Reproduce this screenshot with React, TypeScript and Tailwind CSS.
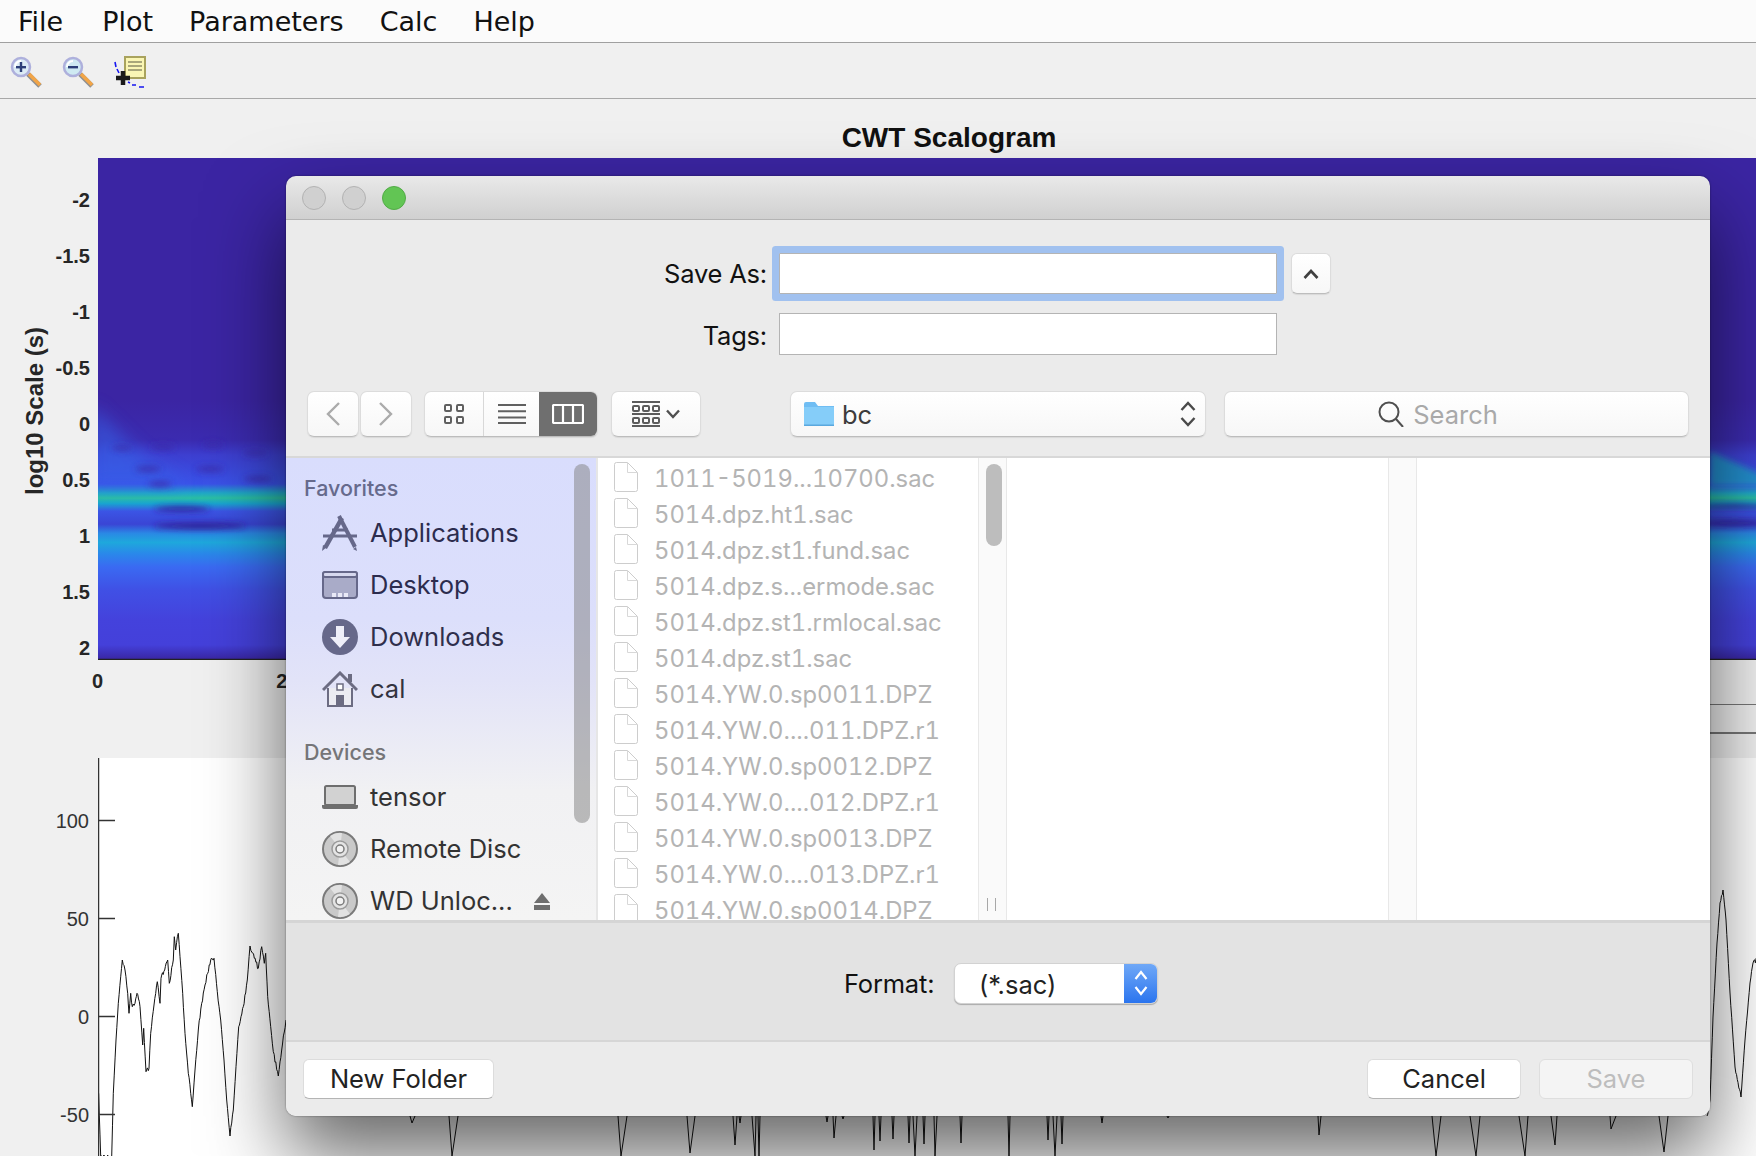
import React from 'react'

const files = [
  '1011-5019...10700.sac',
  '5014.dpz.ht1.sac',
  '5014.dpz.st1.fund.sac',
  '5014.dpz.s...ermode.sac',
  '5014.dpz.st1.rmlocal.sac',
  '5014.dpz.st1.sac',
  '5014.YW.0.sp0011.DPZ',
  '5014.YW.0....011.DPZ.r1',
  '5014.YW.0.sp0012.DPZ',
  '5014.YW.0....012.DPZ.r1',
  '5014.YW.0.sp0013.DPZ',
  '5014.YW.0....013.DPZ.r1',
  '5014.YW.0.sp0014.DPZ',
]

// control points read off the trace, in zoomed crop coordinates
const leftTrace = [
  [296, 1060], [302, 1250], [335, 1250], [340, 1060], [348, 900], [355, 790], [367, 660], [375, 690], [383, 760], [387, 820],
  [392, 760], [397, 800], [405, 790], [411, 760], [420, 800], [428, 915], [431, 865], [438, 995], [447, 985], [452, 880],
  [462, 795], [472, 725], [480, 790], [483, 715], [494, 690], [503, 660], [508, 730], [520, 660], [523, 590], [527, 630],
  [535, 580], [540, 650], [548, 760], [555, 880], [565, 1000], [577, 1100], [585, 990], [595, 870], [605, 790], [615, 735],
  [623, 700], [632, 660], [642, 655], [652, 755], [662, 840], [672, 960], [680, 1080], [690, 1188], [700, 1110], [708, 980],
  [716, 860], [730, 800], [742, 720], [750, 618], [758, 640], [775, 685], [785, 620], [793, 670], [797, 640], [803, 770],
  [812, 860], [820, 935], [835, 1008], [845, 930], [858, 840],
].map(([x, y]) => [x / 3, y / 3 + 740])

const rightTrace = [
  [1707, 1116], [1710, 1100], [1713, 1017], [1717, 943], [1720, 903], [1723, 890], [1726, 920], [1730, 993], [1735, 1067],
  [1741, 1097], [1745, 1040], [1750, 983], [1753, 963], [1757, 960],
]

// the bits of trace that hang below the dialog: x in, x at the tip, x out, tip y
const spikes = [
  [410, 412, 415, 1123], [449, 452, 458, 1156], [618, 621, 627, 1156], [687, 690, 695, 1153], [733, 735, 737, 1145],
  [739, 740, 741, 1123], [752, 755, 756, 1156], [758, 759, 760, 1156], [826, 827, 828, 1122], [833, 834, 836, 1138],
  [842, 843, 844, 1119], [873, 874, 875, 1150], [879, 880, 881, 1141], [892, 893, 894, 1139], [908, 909, 910, 1143],
  [913, 915, 917, 1156], [923, 924, 925, 1144], [934, 935, 937, 1156], [960, 961, 962, 1143], [1008, 1009, 1010, 1156],
  [1047, 1048, 1049, 1140], [1053, 1055, 1057, 1156], [1061, 1062, 1063, 1144], [1101, 1102, 1103, 1123],
  [1167, 1168, 1169, 1118], [1318, 1319, 1321, 1135], [1432, 1436, 1441, 1156], [1470, 1476, 1480, 1156],
  [1519, 1525, 1528, 1156], [1551, 1555, 1557, 1145], [1610, 1611, 1616, 1129], [1659, 1664, 1668, 1152],
]

const noisy = (pts: number[][]) => {
  let d = `M${pts[0][0]} ${pts[0][1]}`
  let n = 0
  for (let i = 1; i < pts.length; i++) {
    const [x0, y0] = pts[i - 1]
    const [x1, y1] = pts[i]
    const steps = Math.max(1, Math.round((x1 - x0) / 0.8))
    // flat stretches look scratchier than the long flanks
    const amp = Math.abs(y1 - y0) / Math.max(x1 - x0, 0.1) > 9 ? 1.5 : 5
    for (let s = 1; s <= steps; s++) {
      n++
      const t = s / steps
      const j = Math.sin(n * 12.9898) * 43758.5453
      const r = (j - Math.floor(j) - 0.5) * amp
      d += ` L${(x0 + (x1 - x0) * t).toFixed(1)} ${(y0 + (y1 - y0) * t + (s === steps ? 0 : r)).toFixed(1)}`
    }
  }
  return d
}

const Heatmap = () => (
  <svg viewBox="98 158 1658 502" preserveAspectRatio="none" className="block w-full h-full">
    <defs>
      <linearGradient id="hm" x1="0" y1="157" x2="0" y2="660" gradientUnits="userSpaceOnUse">
        <stop offset="0" stopColor="#3b25a3" />
        <stop offset="0.483" stopColor="#3b25a3" />
        <stop offset="0.563" stopColor="#3b2bb0" />
        <stop offset="0.592" stopColor="#3d3fd0" />
        <stop offset="0.650" stopColor="#3a52e8" />
        <stop offset="0.668" stopColor="#20a8c8" />
        <stop offset="0.678" stopColor="#2bbfa4" />
        <stop offset="0.689" stopColor="#1aa5d0" />
        <stop offset="0.704" stopColor="#3b55e5" />
        <stop offset="0.730" stopColor="#3a45d5" />
        <stop offset="0.748" stopColor="#2a88e5" />
        <stop offset="0.766" stopColor="#1ea8dc" />
        <stop offset="0.789" stopColor="#2a88ea" />
        <stop offset="0.815" stopColor="#3a6af2" />
        <stop offset="0.861" stopColor="#4050e5" />
        <stop offset="0.920" stopColor="#4442dc" />
        <stop offset="0.970" stopColor="#4440da" />
        <stop offset="0.990" stopColor="#3c2eb4" />
        <stop offset="1" stopColor="#3a25a0" />
      </linearGradient>
      <filter id="b4" x="-50%" y="-50%" width="200%" height="200%"><feGaussianBlur stdDeviation="3" /></filter>
      <filter id="b10" x="-50%" y="-50%" width="200%" height="200%"><feGaussianBlur stdDeviation="9" /></filter>
    </defs>
    <rect x="98" y="157" width="1658" height="503" fill="url(#hm)" />
    <polygon points="90,405 90,486 190,486 145,458" fill="#3566ea" opacity="0.55" filter="url(#b10)" />
    <polygon points="1710,452 1710,486 1770,486 1770,478" fill="#1f9fc8" opacity="0.8" filter="url(#b4)" />
    <g fill="#3a2ba8" opacity="0.8" filter="url(#b4)">
      <ellipse cx="122" cy="448" rx="10" ry="2.5" />
      <ellipse cx="163" cy="447" rx="12" ry="2.5" />
      <ellipse cx="213" cy="445" rx="10" ry="2.5" />
      <ellipse cx="255" cy="453" rx="12" ry="2.5" />
      <ellipse cx="148" cy="469" rx="13" ry="3" />
      <ellipse cx="210" cy="469" rx="14" ry="3" />
      <ellipse cx="258" cy="479" rx="14" ry="3" />
      <ellipse cx="160" cy="484" rx="12" ry="3" />
    </g>
    <g fill="#2e1f90" filter="url(#b4)">
      <ellipse cx="182" cy="509" rx="28" ry="2.5" />
      <ellipse cx="200" cy="526" rx="46" ry="3" />
      <ellipse cx="1735" cy="506" rx="34" ry="2" />
      <ellipse cx="1735" cy="523" rx="34" ry="2.5" />
    </g>
    <line x1="98" y1="659.5" x2="1756" y2="659.5" stroke="#222" strokeWidth="1.5" />
  </svg>
)

const Trace = () => (
  <svg viewBox="98 758 1658 398" className="block w-full h-full">
    <g fill="none" stroke="#111" strokeWidth="1">
      <path d={noisy(leftTrace)} />
      <path d={noisy(rightTrace)} />
      {spikes.map(([a, m, b, y], i) => (
        <path key={i} d={`M${a} 1116 L${m} ${y} L${b} 1116`} />
      ))}
    </g>
    <g stroke="#333" strokeWidth="1.5">
      <line x1="98.5" y1="758" x2="98.5" y2="1156" />
      <line x1="98" y1="820.5" x2="115" y2="820.5" />
      <line x1="98" y1="918.5" x2="115" y2="918.5" />
      <line x1="98" y1="1016.5" x2="115" y2="1016.5" />
      <line x1="98" y1="1114.5" x2="115" y2="1114.5" />
    </g>
  </svg>
)

const Magnifier = ({ minus }: { minus?: boolean }) => (
  <svg width="32" height="32" viewBox="0 0 32 32">
    <line x1="18" y1="18" x2="30" y2="30" stroke="#8f8f8f" strokeWidth="5" />
    <line x1="19" y1="18" x2="30" y2="29" stroke="#f2a548" strokeWidth="3.5" />
    <circle cx="11" cy="11" r="9" fill={minus ? '#cfeaf2' : '#dcecf6'} stroke="#aeb0dc" strokeWidth="2.5" />
    <path d="M5 11a6 6 0 0 1 6-6" stroke="#fff" strokeWidth="2" fill="none" />
    <rect x="6" y="10" width="10" height="2.4" fill="#2c3f78" />
    {!minus && <rect x="9.8" y="6" width="2.4" height="10" fill="#2c3f78" />}
  </svg>
)

const DataCursor = () => (
  <svg width="32" height="32" viewBox="0 0 32 32">
    <rect x="11" y="1" width="20" height="21" fill="#faf6b4" stroke="#a9a35e" strokeWidth="2" />
    <path d="M14 6h14M14 10h14M14 14h14" stroke="#a9a77a" strokeWidth="2" />
    <path d="M1 6l1 5M3 13l2 4M14 26l2 1M18 29h4M25 31h5" stroke="#1616f0" strokeWidth="1.6" fill="none" />
    <path d="M2 22h14M9 15v14" stroke="#1a1a1a" strokeWidth="4.5" />
  </svg>
)

const FileIcon = () => (
  <svg width="24" height="30" viewBox="0 0 24 30" className="shrink-0">
    <path d="M.5 2.5a2 2 0 0 1 2-2h11l10 10v17a2 2 0 0 1-2 2h-19a2 2 0 0 1-2-2z" fill="#fff" stroke="#cdcdcd" />
    <path d="M13.500.5v10h10" fill="none" stroke="#d8d8d8" />
  </svg>
)

const AppsIcon = () => (
  <svg width="36" height="36" viewBox="0 0 36 36" fill="none" stroke="#66688a">
    <path d="M20 3L3 33" strokeWidth="4.5" />
    <path d="M17 1l16 31" strokeWidth="4" />
    <path d="M10 15h16" strokeWidth="3" />
    <path d="M1 21h34" strokeWidth="3" />
    <path d="M0 36l1-6 4 2z" fill="#66688a" strokeWidth="0" />
    <path d="M35 36l-4-2 3-2z" fill="#66688a" strokeWidth="0" />
  </svg>
)

const DesktopIcon = () => (
  <svg width="36" height="28" viewBox="0 0 36 28">
    <rect x="1" y="1" width="34" height="26" rx="3" fill="#a9abc8" stroke="#66688a" strokeWidth="2" />
    <rect x="1" y="1" width="34" height="5" rx="2" fill="#d6d8ee" stroke="#66688a" strokeWidth="2" />
    <path d="M10 22h4v4h-4zM16 22h4v4h-4zM22 22h4v4h-4z" fill="#e9e9f6" />
  </svg>
)

const DownloadsIcon = () => (
  <svg width="36" height="36" viewBox="0 0 36 36">
    <circle cx="18" cy="18" r="18" fill="#66688a" />
    <path d="M14 7h8v11h6L18 29 8 18h6z" fill="#eeeef8" />
  </svg>
)

const HomeIcon = () => (
  <svg width="36" height="36" viewBox="0 0 36 36">
    <path d="M6 17v18h24V17" fill="#ececf2" stroke="#6c6c82" strokeWidth="2" />
    <path d="M1 19L18 2l17 17" fill="none" stroke="#6c6c82" strokeWidth="3" />
    <rect x="26" y="3" width="4" height="8" fill="#6c6c82" />
    <rect x="15" y="13" width="6" height="6" fill="#fff" stroke="#6c6c82" strokeWidth="1.5" />
    <rect x="14" y="24" width="8" height="11" fill="#6c6c82" />
  </svg>
)

const LaptopIcon = () => (
  <svg width="36" height="24" viewBox="0 0 36 24">
    <rect x="3" y="1" width="30" height="19" rx="1.5" fill="#d2d2d2" stroke="#6e6e6e" strokeWidth="2" />
    <path d="M0 20h36v2a2 2 0 0 1-2 2H2a2 2 0 0 1-2-2z" fill="#6e6e6e" />
  </svg>
)

const DiscIcon = () => (
  <svg width="36" height="36" viewBox="0 0 36 36">
    <circle cx="18" cy="18" r="17" fill="#c9c9c9" stroke="#7a7a7a" strokeWidth="2" />
    <path d="M18 18L8 5a17 17 0 0 1 12-3zM18 18l10 13a17 17 0 0 1-12 3z" fill="#e2e2e2" />
    <circle cx="18" cy="18" r="8" fill="#e4e4e4" stroke="#9a9a9a" strokeWidth="1.5" />
    <circle cx="18" cy="18" r="4" fill="#f2f2f2" stroke="#7a7a7a" strokeWidth="1.5" />
  </svg>
)

const SideRow = ({ icon, label, color, eject }: { icon: React.ReactNode; label: string; color: string; eject?: boolean }) => (
  <div className="h-[52px] flex items-center">
    <div className="w-[36px] ml-[36px] flex justify-center shrink-0">{icon}</div>
    <span className={`ml-[12px] text-[25.500px] ${color}`}>{label}</span>
    {eject && (
      <svg width="16" height="17" viewBox="0 0 16 17" className="ml-[21px]" fill="#6e6e6e">
        <path d="M8 0l8 10H0z" />
        <rect y="12" width="16" height="5" />
      </svg>
    )}
  </div>
)

const Light = ({ green }: { green?: boolean }) => (
  <div className={green ? 'w-[24px] h-[24px] rounded-full bg-[#62c554] border border-[#52ab47]' : 'w-[24px] h-[24px] rounded-full bg-[#d0d0d0] border border-[#b2b2b2]'} />
)

const btn = 'bg-gradient-to-b from-white to-[#f7f7f7] border border-[#dcdcdc] border-b-[#bdbdbd] shadow-[0_1px_1px_rgba(0,0,0,0.08)]'

const App = () => (
  <div className="relative w-[1756px] h-[1156px] overflow-hidden bg-[#f0f0f0] font-['Liberation_Sans',sans-serif]">
    <div className="h-[43px] bg-[#fbfbfb] border-b border-b-[#a0a0a0] flex items-center pl-[18px] pt-[3px] text-[27px] text-[#111] font-['DejaVu_Sans',sans-serif]">
      <span>File</span>
      <span className="ml-[39px]">Plot</span>
      <span className="ml-[36px]">Parameters</span>
      <span className="ml-[36px]">Calc</span>
      <span className="ml-[36px]">Help</span>
    </div>
    <div className="h-[56px] border-b border-b-[#a8a8a8] flex items-center pl-[10px] pt-[2px] gap-[20px]">
      <Magnifier />
      <Magnifier minus />
      <DataCursor />
    </div>

    <div className="h-[59px] flex items-end justify-center pb-[3px] pl-[142px] text-[28px] leading-[34px] font-bold text-[#111]">CWT Scalogram</div>

    <div className="h-[502px] flex">
      <div className="w-[98px] shrink-0 flex">
        <div className="w-[52px] flex items-center justify-center">
          <span className="-rotate-90 whitespace-nowrap text-[24px] font-bold text-[#262626] translate-x-[9px] translate-y-[2px]">log10 Scale (s)</span>
        </div>
        <div className="w-[38px] flex flex-col items-end pt-[14px] text-[20px] font-bold text-[#262626] leading-[56px]">
          {['-2', '-1.5', '-1', '-0.5', '0', '0.5', '1', '1.5', '2'].map(t => (
            <span key={t} className="h-[56px] shrink-0">{t}</span>
          ))}
        </div>
      </div>
      <div className="flex-1">
        <Heatmap />
      </div>
    </div>

    <div className="h-[98px] flex items-start">
      <div className="flex pl-[92px] pt-[6px] gap-[173px] text-[20px] font-bold text-[#262626]">
        <span>0</span>
        <span>2</span>
      </div>
      <div className="ml-auto w-[400px] pt-[44px]">
        <div className="h-[1px] bg-[#777]" />
        <div className="h-[2px] mt-[27px] bg-[#777]" />
      </div>
    </div>

    <div className="h-[398px] flex">
      <div className="w-[98px] shrink-0 flex flex-col items-end pr-[9px] pt-[50px] text-[20px] text-[#333] leading-[26px]">
        <span className="h-[98px] shrink-0">100</span>
        <span className="h-[98px] shrink-0">50</span>
        <span className="h-[98px] shrink-0">0</span>
        <span className="h-[98px] shrink-0">-50</span>
      </div>
      <div className="flex-1 bg-white">
        <Trace />
      </div>
    </div>

    {/* save sheet floats over the figure */}
    <div className="absolute left-[286px] top-[176px] w-[1424px] h-[940px] rounded-[10px] shadow-[0_40px_80px_rgba(0,0,0,0.6),0_0_2px_rgba(0,0,0,0.5)]">
      <div className="w-full h-full rounded-[10px] overflow-hidden flex flex-col font-['Inter',sans-serif] text-[#111]">
        <div className="h-[44px] shrink-0 bg-gradient-to-b from-[#e9e9e9] to-[#d0d0d0] border-b border-b-[#b4b4b4] flex items-center pl-[16px] gap-[16px]">
          <Light />
          <Light />
          <Light green />
        </div>

        <div className="h-[236px] shrink-0 bg-[#ebebeb] flex flex-col pt-[33px]">
          <div className="flex items-center h-[41px]">
            <span className="w-[481px] pt-[1px] text-right text-[25.500px] tracking-[-0.2px]">Save As:</span>
            <div className="ml-[12px] w-[498px] h-[41px] bg-white border border-[#b4b4b4] shadow-[0_0_0_7px_#a1c1ef] rounded-[1px]" />
            <div className={`ml-[14px] w-[40px] h-[41px] rounded-[6px] ${btn} flex items-center justify-center`}>
              <svg width="16" height="10" viewBox="0 0 16 10" fill="none" stroke="#404040" strokeWidth="2.6"><path d="M1.500 9L8 2l6.500 7" /></svg>
            </div>
          </div>
          <div className="flex items-center h-[41px] mt-[19px]">
            <span className="w-[481px] pt-[5px] text-right text-[25.500px] tracking-[-0.2px]">Tags:</span>
            <div className="ml-[12px] w-[498px] h-[42px] bg-white border border-[#b4b4b4]" />
          </div>
          <div className="flex items-stretch h-[46px] mt-[37px] pl-[21px]">
            <div className={`w-[52px] rounded-[7px] ${btn} flex items-center justify-center`}>
              <svg width="16" height="24" viewBox="0 0 16 24" fill="none" stroke="#ababab" strokeWidth="2.4"><path d="M14 1L3 12l11 11" /></svg>
            </div>
            <div className={`w-[52px] ml-[1px] rounded-[7px] ${btn} flex items-center justify-center`}>
              <svg width="16" height="24" viewBox="0 0 16 24" fill="none" stroke="#ababab" strokeWidth="2.4"><path d="M2 1l11 11L2 23" /></svg>
            </div>
            <div className={`w-[174px] ml-[12px] rounded-[7px] overflow-hidden flex ${btn}`}>
              <div className="w-[59px] border-r border-r-[#d8d8d8] flex items-center justify-center">
                <svg width="20" height="20" viewBox="0 0 20 20" fill="none" stroke="#606060" strokeWidth="2"><rect x="1" y="1" width="6" height="6" rx="1" /><rect x="13" y="1" width="6" height="6" rx="1" /><rect x="1" y="13" width="6" height="6" rx="1" /><rect x="13" y="13" width="6" height="6" rx="1" /></svg>
              </div>
              <div className="w-[55px] flex items-center justify-center">
                <svg width="28" height="20" viewBox="0 0 28 20" stroke="#606060" strokeWidth="2"><path d="M0 1h28M0 7.300h28M0 13.600h28M0 19h28" /></svg>
              </div>
              <div className="flex-1 bg-[#6f6f6f] flex items-center justify-center">
                <svg width="32" height="20" viewBox="0 0 32 20" fill="none" stroke="#fff" strokeWidth="2.2"><rect x="1" y="1" width="30" height="18" rx="1" /><path d="M11 1v18M21 1v18" /></svg>
              </div>
            </div>
            <div className={`w-[90px] ml-[13px] rounded-[7px] ${btn} flex items-center justify-center gap-[6px]`}>
              <svg width="28" height="26" viewBox="0 0 28 26" fill="none" stroke="#5c5c5c" strokeWidth="2">
                <path d="M0 1h28M0 13h28M0 25h28" />
                <rect x="1" y="5" width="6" height="5" rx="1" /><rect x="11" y="5" width="6" height="5" rx="1" /><rect x="21" y="5" width="6" height="5" rx="1" />
                <rect x="1" y="17" width="6" height="5" rx="1" /><rect x="11" y="17" width="6" height="5" rx="1" /><rect x="21" y="17" width="6" height="5" rx="1" />
              </svg>
              <svg width="14" height="10" viewBox="0 0 14 10" fill="none" stroke="#505050" strokeWidth="2.4"><path d="M1 1.500l6 6.500 6-6.500" /></svg>
            </div>
            <div className={`w-[416px] ml-[89px] rounded-[7px] ${btn} flex items-center pl-[13px] pr-[9px]`}>
              <svg width="30" height="24" viewBox="0 0 30 24" className="shrink-0">
                <path d="M0 2a2 2 0 0 1 2-2h9l3 4h16v20H0z" fill="#6fbdf3" />
                <rect y="5" width="30" height="19" fill="#85cdf9" />
                <rect y="22.500" width="30" height="1.500" fill="#5aa8de" />
              </svg>
              <span className="ml-[8px] pt-[2px] text-[25.500px] text-[#3c3c3c]">bc</span>
              <svg width="16" height="26" viewBox="0 0 16 26" fill="none" stroke="#4a4a4a" strokeWidth="2.4" className="ml-auto"><path d="M1.500 9L8 2l6.500 7M1.500 17L8 24l6.500-7" /></svg>
            </div>
            <div className={`w-[465px] ml-[18px] rounded-[7px] ${btn} flex items-center justify-center pr-[37px]`}>
              <svg width="26" height="26" viewBox="0 0 26 26" fill="none" stroke="#4f4f4f" strokeWidth="2"><circle cx="11" cy="11" r="9.500" /><path d="M18 18l7 8" /></svg>
              <span className="ml-[9px] pt-[2px] text-[25.500px] text-[#a9a9a9]">Search</span>
            </div>
          </div>
        </div>

        <div className="h-[2px] shrink-0 bg-[#d8d8d8]" />
        <div className="h-[462px] shrink-0 flex bg-white overflow-hidden">
          <div className="w-[310px] shrink-0 relative bg-[linear-gradient(to_bottom,#d9ddfd_0%,#dcdffb_35%,#e2e3f8_48%,#f1f1f3_72%,#f4f4f4_100%)]">
            <div className="absolute right-[6px] top-[6px] w-[16px] h-[359px] rounded-full bg-[#7f7f7f]/50" />
            <div className="h-[18px]" />
            <div className="h-[24px] pl-[18px] text-[21.500px] leading-[24px] font-medium text-[#666a8c]">Favorites</div>
            <div className="pt-[7px]">
              <SideRow icon={<AppsIcon />} label="Applications" color="text-[#2c2c4e]" />
              <SideRow icon={<DesktopIcon />} label="Desktop" color="text-[#2c2c4e]" />
              <SideRow icon={<DownloadsIcon />} label="Downloads" color="text-[#2f2f4c]" />
              <SideRow icon={<HomeIcon />} label="cal" color="text-[#33333f]" />
            </div>
            <div className="h-[24px] mt-[25px] pl-[18px] text-[21.500px] leading-[24px] font-medium text-[#757578]">Devices</div>
            <div className="pt-[7px]">
              <SideRow icon={<LaptopIcon />} label="tensor" color="text-[#333]" />
              <SideRow icon={<DiscIcon />} label="Remote Disc" color="text-[#333]" />
              <SideRow icon={<DiscIcon />} label="WD Unloc..." color="text-[#333]" eject />
            </div>
          </div>
          <div className="w-[2px] shrink-0 bg-[#e6e6e6]" />
          <div className="w-[380px] shrink-0 pt-[1px] overflow-hidden">
            {files.map(f => (
              <div key={f} className="h-[36px] flex items-center pl-[16px]">
                <FileIcon />
                <span className="ml-[16px] pt-[3px] text-[23.800px] tabular-nums text-[#b4b4b4] whitespace-nowrap">{f}</span>
              </div>
            ))}
          </div>
          <div className="relative w-[29px] shrink-0 bg-[#fafafa] border-x border-x-[#e8e8e8]">
            <div className="absolute left-[7px] top-[6px] w-[16px] h-[82px] rounded-full bg-[#bdbdbd]" />
            <div className="absolute left-[8px] bottom-[9px] w-[9px] h-[13px] border-x border-x-[#a8a8a8]" />
          </div>
          <div className="w-[381px] shrink-0" />
          <div className="w-[29px] shrink-0 bg-[#fafafa] border-x border-x-[#e8e8e8]" />
          <div className="flex-1" />
        </div>

        <div className="h-[3px] shrink-0 bg-[#d5d5d5]" />
        <div className="h-[117px] shrink-0 bg-[#e3e3e3] flex items-center pl-[558px] pt-[3px]">
          <span className="w-[90px] pt-[3px] text-[25.500px] tracking-[-0.2px] whitespace-nowrap">Format:</span>
          <div className="ml-[20px] w-[204px] h-[41px] flex rounded-[7px] overflow-hidden bg-white shadow-[0_1px_1px_rgba(0,0,0,0.25)] border border-[#d2d2d2]">
            <span className="pl-[24px] text-[25.500px] leading-[41px] text-[#222] flex-1">(*.sac)</span>
            <div className="w-[33px] bg-gradient-to-b from-[#6fa8f7] to-[#2a74ee] flex items-center justify-center">
              <svg width="14" height="30" viewBox="0 0 14 30" fill="none" stroke="#fff" strokeWidth="2.2"><path d="M1.500 11L7 4l5.500 7M1.500 19L7 26l5.500-7" /></svg>
            </div>
          </div>
        </div>
        <div className="h-[2px] shrink-0 bg-[#d6d6d6]" />
        <div className="flex-1 bg-[#ebebeb] flex items-center px-[17px]">
          <div className="w-[191px] h-[40px] rounded-[6px] bg-white border border-[#dcdcdc] border-b-[#b4b4b4] flex items-center justify-center text-[25.500px] text-[#222]">New Folder</div>
          <div className="ml-auto w-[154px] h-[40px] rounded-[6px] bg-white border border-[#dcdcdc] border-b-[#b4b4b4] flex items-center justify-center text-[25.500px] text-[#222]">Cancel</div>
          <div className="ml-[18px] w-[154px] h-[40px] rounded-[6px] bg-[#f4f4f4] border border-[#dedede] flex items-center justify-center text-[25.500px] text-[#bdbdbd]">Save</div>
        </div>
      </div>
    </div>
  </div>
)

export default App
